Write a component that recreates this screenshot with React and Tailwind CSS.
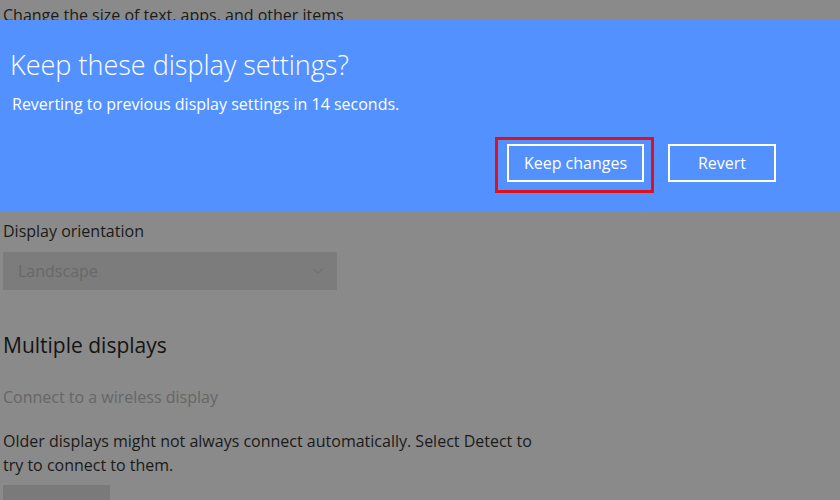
import { ChevronDown } from 'lucide-react';

const font = { fontFamily: '"Open Sans", "Noto Sans", sans-serif' };

const App = () => {
  return (
    <div className="relative w-[840px] h-[500px] overflow-hidden bg-[#8a8a8a]" style={font}>
      {/* Settings page underneath (dimmed) */}
      <div className="pl-[3px] pt-[3px]">
        <p className="text-[16px] leading-[24px] text-[#1a1a1a]">Change the size of text, apps, and other items</p>

        <p className="mt-[192px] text-[16px] leading-[24px] text-[#1a1a1a]">Display orientation</p>
        <div className="mt-[9px] w-[334px] h-[38px] bg-[#7c7c7c] flex items-center justify-between pl-[15px] pr-[10px]">
          <span className="text-[16px] text-[#686868]">Landscape</span>
          <ChevronDown size={18} strokeWidth={1.25} className="text-[#6c6c6c]" />
        </div>

        <h2 className="mt-[39px] text-[21px] leading-[32px] text-[#141414]">Multiple displays</h2>
        <p className="mt-[24px] text-[16px] leading-[24px] text-[#666666]">Connect to a wireless display</p>
        <p className="mt-[20px] w-[545px] text-[16px] leading-[24px] text-[#1a1a1a]">
          Older displays might not always connect automatically. Select Detect to try to connect to them.
        </p>
        <div className="mt-[8px] w-[107px] h-[32px] bg-[#7a7a7a]" />
      </div>

      {/* Confirmation banner */}
      <div className="absolute left-0 right-0 top-[20px] h-[191px] bg-[#5291fe] text-white">
        <div className="pl-[10px] pt-[27px]">
          <h1 className="text-[27px] leading-[36px] font-light">Keep these display settings?</h1>
          <p className="mt-[10px] pl-[2px] text-[16px] leading-[22px]">Reverting to previous display settings in 14 seconds.</p>
        </div>
        <div className="flex justify-end items-center gap-[14px] pr-[64px] mt-[22px]">
          <div className="border-[3px] border-[#e0101f] pl-[9px] pr-[7px] pt-[4px] pb-[8px]">
            <button className="w-[137px] h-[38px] border-2 border-white text-[16px]">Keep changes</button>
          </div>
          <button className="w-[108px] h-[38px] border-2 border-white text-[16px] -mt-[4px]">Revert</button>
        </div>
      </div>
    </div>
  );
};

export default App;
